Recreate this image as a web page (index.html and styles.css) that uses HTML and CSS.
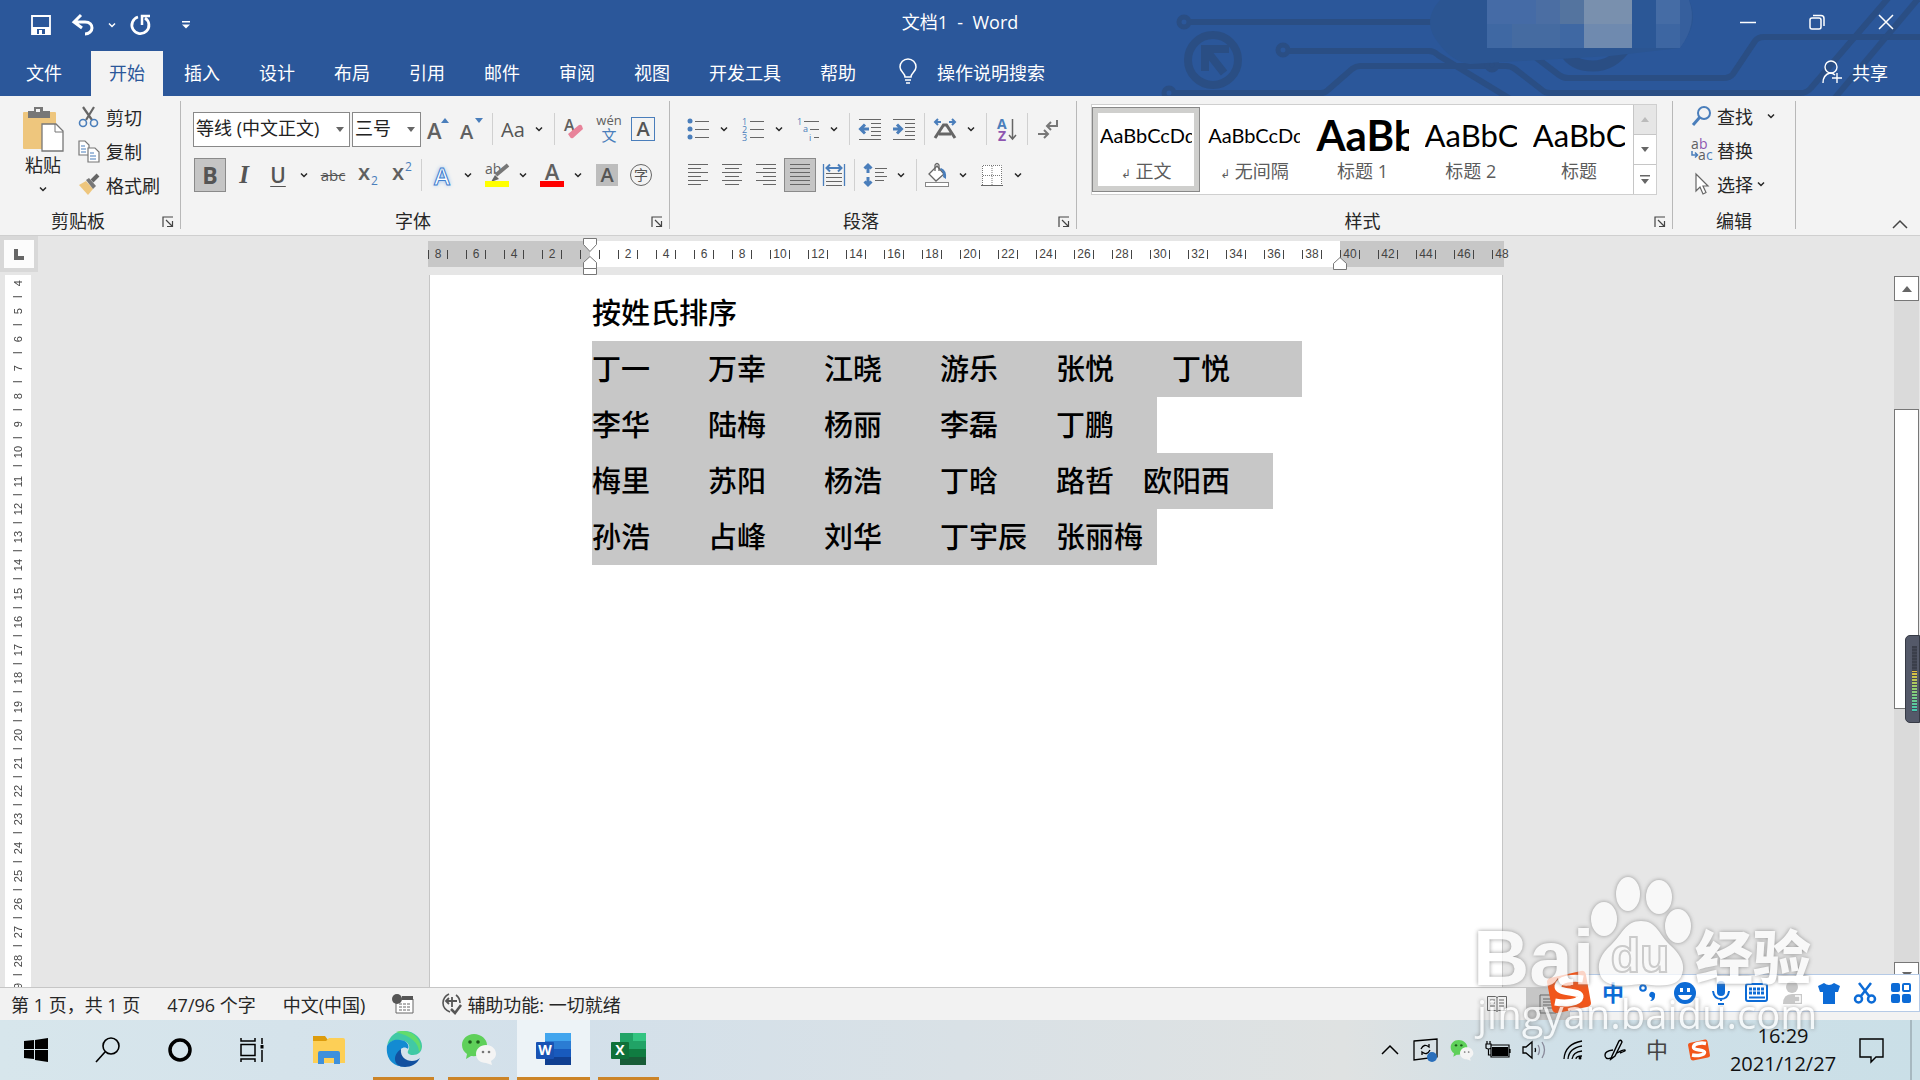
FILE: index.html
```html
<!DOCTYPE html>
<html lang="zh-CN">
<head>
  <meta charset="UTF-8">
  <meta name="viewport" content="width=device-width, initial-scale=1.0">
  <title>文档1 - Word</title>
  <link rel="stylesheet" href="styles.css">
</head>
<body>
  <!-- Shared icons -->
  <svg class="defs" aria-hidden="true">
    <symbol id="chev" viewBox="0 0 8 6"><path d="M1 1.500l3 3 3-3" fill="none" stroke="currentColor" stroke-width="1.500"/></symbol>
    <symbol id="launch" viewBox="0 0 12 12"><path d="M1 11V1h10M4 4l6 6M10.500 5v5.500H5" fill="none" stroke="#444" stroke-width="1.200"/></symbol>
    <symbol id="sogou" viewBox="0 0 48 48">
      <path d="M5 10q-3 1-3 4l5 27q1 4 5 4l30-6q4-1 4-4L41 7q-1-5-5-4z" fill="#f1561b"/>
      <path d="M38 11C28 9 14 11 13 18c-1 8 23 4 22 11-1 6-15 7-25 5" fill="none" stroke="#fff" stroke-width="7"/>
    </symbol>
    <symbol id="wechat" viewBox="0 0 36 36">
      <path d="M13 3C6 3 1 8 1 14c0 4 2 7 5 9l-1 5 5-3c8 1 16-3 16-11C26 8 20 3 13 3z" fill="#5fd05a"/>
      <circle cx="9" cy="11" r="1.800" fill="#1d5a1b"/><circle cx="17" cy="11" r="1.800" fill="#1d5a1b"/>
      <path d="M25 14c-6 0-10 4-10 9s4 9 10 9l6 2-1-4c3-2 5-4 5-7 0-5-4-9-10-9z" fill="#f4f4f4"/>
      <circle cx="22" cy="21" r="1.300" fill="#777"/><circle cx="28" cy="21" r="1.300" fill="#777"/>
    </symbol>
  </svg>

  <header class="header">
    <svg class="header-art" viewBox="1160 0 760 96" aria-hidden="true">
      <g fill="none" stroke="#2a4e84" stroke-width="6">
        <circle cx="1184" cy="22" r="5" stroke-width="5"/>
        <path d="M1190 22h250"/>
        <circle cx="1213" cy="60" r="25" stroke-width="8"/>
        <circle cx="1283" cy="50" r="5" stroke-width="5"/>
        <path d="M1289 51h140q5 0 9 4l74 45"/>
        <circle cx="1169" cy="93" r="5" stroke-width="5"/>
        <path d="M1175 93h146q4 0 7-3l24-21q4-3 8-3h146q5 0 9 3l27 21q3 3 8 3h250q7 0 11-5L1890-4"/>
        <circle cx="1492" cy="65" r="5" stroke-width="5"/>
        <path d="M1534 56l25 19q4 3 9 3h155q7 0 10-4l22-33q3-4 9-4h160"/>
        <path d="M1834 99l84-100"/>
        <path d="M1565 52q8 14 28 14t34-20" stroke-width="11"/>
      </g>
      <path d="M1205 71V49h24M1206 50l18 23" fill="none" stroke="#2a4e84" stroke-width="8"/>
      <path d="M1440 0q-20 22 0 45 13 17 30 19l140-8 70-8q13-18 13-30 0-10-4-18z" fill="#2b5592"/>
      <g>
        <path fill="#456ba6" d="M1487 0h49v24h-49z"/><path fill="#4b6ea3" d="M1536 0h24v24h-24z"/>
        <path fill="#54749f" d="M1560 0h24v24h-24z"/><path fill="#7990ae" d="M1584 0h48v24h-48z"/>
        <path fill="#3f68a3" d="M1487 24h25v24h-25zM1560 24h24v24h-24z"/><path fill="#456ba1" d="M1512 24h48v24h-48z"/>
        <path fill="#6f8aaf" d="M1584 24h48v24h-48z"/><path fill="#2b5796" d="M1632 0h24v48h-24z"/>
        <path fill="#456ca5" d="M1656 0h24v24h-24z"/><path fill="#3d66a2" d="M1656 24h24v24h-24z"/>
        <path fill="#365f9d" d="M1680 0h9q9 24-9 48z"/>
      </g>
    </svg>

    <div class="titlebar">
      <div class="quick-access">
        <button class="qa-btn" aria-label="保存">
          <svg width="20" height="20" viewBox="0 0 20 20"><path d="M1 1h18v18H1z" fill="none" stroke="#fff" stroke-width="1.800"/><path d="M1 12h18v7H1z" fill="#fff"/><path d="M6 14h8v5H6z" fill="#2b579a"/><path d="M8 15h3v4H8z" fill="#fff"/></svg>
        </button>
        <button class="qa-btn" aria-label="撤消">
          <svg width="24" height="22" viewBox="0 0 24 22"><path d="M10 1L3 8l8 6M3 8h11c5 0 7 3 7 6s-3 6-7 6" fill="none" stroke="#fff" stroke-width="3"/></svg>
        </button>
        <button class="qa-btn narrow" aria-label="撤消选项"><svg width="8" height="6"><use href="#chev"/></svg></button>
        <button class="qa-btn" aria-label="重复">
          <svg width="22" height="22" viewBox="0 0 22 22"><path d="M8 3a8.500 8.500 0 1 0 7 1" fill="none" stroke="#fff" stroke-width="2.800"/><path d="M12 11V2h8" fill="none" stroke="#fff" stroke-width="2.500"/></svg>
        </button>
        <button class="qa-btn wide" aria-label="自定义快速访问工具栏">
          <svg width="8" height="8" viewBox="0 0 8 8"><path d="M0 0h8v1.500H0zM0 3.500h8L4 7.500z" fill="#fff"/></svg>
        </button>
      </div>
      <h1 class="doc-title">文档1 &nbsp;- &nbsp;Word</h1>
      <div class="window-controls">
        <button class="win-btn" aria-label="最小化"><svg width="16" height="16"><path d="M0 8.500h16" stroke="#fff" stroke-width="1.500"/></svg></button>
        <button class="win-btn" aria-label="向下还原"><svg width="16" height="16" viewBox="0 0 16 16" fill="none" stroke="#fff" stroke-width="1.500"><rect x="1" y="4" width="11" height="11" rx="2"/><path d="M4 1.500h8q3 0 3 3V12"/></svg></button>
        <button class="win-btn" aria-label="关闭"><svg width="16" height="16"><path d="M1 1l14 14M15 1L1 15" stroke="#fff" stroke-width="1.500"/></svg></button>
      </div>
    </div>

    <nav class="tabs">
      <button class="tab file">文件</button>
      <button class="tab active">开始</button>
      <button class="tab">插入</button>
      <button class="tab">设计</button>
      <button class="tab">布局</button>
      <button class="tab">引用</button>
      <button class="tab">邮件</button>
      <button class="tab">审阅</button>
      <button class="tab">视图</button>
      <button class="tab">开发工具</button>
      <button class="tab">帮助</button>
      <button class="tell-me">
        <svg width="18" height="26" viewBox="0 0 18 26" fill="none" stroke="#fff" stroke-width="1.500"><path d="M6 18c0-4-5-5-5-10a8 8 0 0 1 16 0c0 5-5 6-5 10zM6 21h6M7 24h4"/></svg>
        操作说明搜索
      </button>
      <button class="share">
        <svg width="20" height="24" viewBox="0 0 20 24" fill="none" stroke="#fff" stroke-width="1.400"><circle cx="9" cy="7" r="6"/><path d="M1 23c0-6 3-9 7-10 2 0 3 0 5 2M15 13v10M10 18h10"/></svg>
        共享
      </button>
    </nav>
  </header>

  <section class="ribbon">
    <div class="group clipboard">
      <div class="group-body">
        <button class="paste">
          <svg width="42" height="45" viewBox="0 0 42 45"><rect x="1" y="5" width="33" height="37" rx="1" fill="#eec67d"/><path d="M6 4h6V0h9v4h7v7H6z" fill="#777"/><path d="M14 2h4v3h-4z" fill="#f3f3f3"/><path d="M20 17h14l7 7v20H20z" fill="#fff" stroke="#777" stroke-width="1.300"/><path d="M33 17v8h8" fill="none" stroke="#777"/></svg>
          <span>粘贴</span>
          <svg class="chev" width="8" height="6"><use href="#chev"/></svg>
        </button>
        <div class="small-list">
          <button class="small-btn"><svg width="22" height="22" viewBox="0 0 22 22" fill="none"><path d="M5 1l9 13M16 1L8 14" stroke="#666" stroke-width="2.200"/><circle cx="5" cy="17" r="3.500" stroke="#4a7ebb" stroke-width="1.600"/><circle cx="16" cy="17" r="3.500" stroke="#4a7ebb" stroke-width="1.600"/></svg>剪切</button>
          <button class="small-btn"><svg width="22" height="22" viewBox="0 0 22 22" stroke="#777" stroke-width="1.200" fill="#fff"><path d="M1 1h6l4 4v10H1z"/><path d="M10 8h7l4 4v10H10z"/><path d="M3 6h4M3 9h5M3 12h5M12 13h4M12 16h6M12 19h6" stroke="#4a7ebb"/></svg>复制</button>
          <button class="small-btn"><svg width="22" height="22" viewBox="0 0 22 22"><path d="M1 11l7-4 7 8-5 6z" fill="#eec67d"/><path d="M8 6l3-2 7 8-3 3z" fill="#777"/><path d="M14 7l6-6" stroke="#666" stroke-width="4"/></svg>格式刷</button>
        </div>
      </div>
      <div class="group-foot"><span>剪贴板</span><button class="launcher" aria-label="剪贴板设置"><svg width="12" height="12"><use href="#launch"/></svg></button></div>
    </div>

    <div class="group font-group">
      <div class="group-body rows">
        <div class="tool-row">
          <label class="combo font-name"><select aria-label="字体"><option>等线 (中文正文)</option></select></label>
          <label class="combo font-size"><select aria-label="字号"><option>三号</option></select></label>
          <button class="tool" aria-label="增大字号"><svg width="26" height="26" viewBox="0 0 26 26"><path d="M16 7l4-5 4 5z" fill="#4a7ebb"/><text x="2" y="23" class="glyph g22">A</text></svg></button>
          <button class="tool" aria-label="减小字号"><svg width="26" height="26" viewBox="0 0 26 26"><path d="M16 2l4 5 4-5z" fill="#4a7ebb"/><text x="1" y="23" class="glyph g20">A</text></svg></button>
          <i class="sep"></i>
          <button class="tool aa">Aa</button>
          <button class="drop" aria-label="更改大小写"><svg width="8" height="6"><use href="#chev"/></svg></button>
          <i class="sep"></i>
          <button class="tool" aria-label="清除格式"><svg width="24" height="24" viewBox="0 0 24 24"><text x="1" y="14" class="glyph g16">A</text><path d="M5 17l11-9q2-1 3 1l1 3-10 9q-2 1-3-1z" fill="#e8839a"/></svg></button>
          <button class="tool" aria-label="拼音指南"><svg width="26" height="28" viewBox="0 0 26 28"><text x="13" y="10" text-anchor="middle" class="plain g13">wén</text><text x="13" y="26" text-anchor="middle" class="blue cjk g15">文</text></svg></button>
          <button class="tool" aria-label="字符边框"><span class="char-border">A</span></button>
        </div>
        <div class="tool-row">
          <button class="tool pressed bold" aria-pressed="true">B</button>
          <button class="tool italic">I</button>
          <button class="tool under">U</button>
          <button class="drop" aria-label="下划线选项"><svg width="8" height="6"><use href="#chev"/></svg></button>
          <button class="tool strike">abc</button>
          <button class="tool" aria-label="下标"><svg width="26" height="26" viewBox="0 0 26 26"><text x="4" y="18" class="glyph g22">x</text><text x="17" y="23" class="blue g12">2</text></svg></button>
          <button class="tool" aria-label="上标"><svg width="26" height="26" viewBox="0 0 26 26"><text x="4" y="18" class="glyph g22">x</text><text x="17" y="9" class="blue g12">2</text></svg></button>
          <i class="sep"></i>
          <button class="tool effect">A</button>
          <button class="drop" aria-label="文本效果"><svg width="8" height="6"><use href="#chev"/></svg></button>
          <button class="tool" aria-label="突出显示"><svg width="26" height="26" viewBox="0 0 26 26"><text x="1" y="12" class="plain g14">ab</text><path d="M24 3L12 13" stroke="#777" stroke-width="4"/><path d="M7 20l4-7 4 4z" fill="#666"/><path d="M1 19h24v6H1z" fill="#ff0"/></svg></button>
          <button class="drop" aria-label="突出显示颜色"><svg width="8" height="6"><use href="#chev"/></svg></button>
          <button class="tool" aria-label="字体颜色"><svg width="26" height="26" viewBox="0 0 26 26"><text x="13" y="18" text-anchor="middle" class="glyph g22">A</text><path d="M1 19h24v6H1z" fill="#f00"/></svg></button>
          <button class="drop" aria-label="字体颜色选项"><svg width="8" height="6"><use href="#chev"/></svg></button>
          <button class="tool" aria-label="字符底纹"><span class="char-shade">A</span></button>
          <button class="tool" aria-label="带圈字符"><span class="char-circle">字</span></button>
        </div>
      </div>
      <div class="group-foot"><span>字体</span><button class="launcher" aria-label="字体设置"><svg width="12" height="12"><use href="#launch"/></svg></button></div>
    </div>

    <div class="group">
      <div class="group-body rows">
        <div class="tool-row">
          <button class="tool" aria-label="项目符号"><svg width="24" height="24" viewBox="0 0 24 24"><g fill="#4a7ebb"><circle cx="4" cy="4" r="2.500"/><circle cx="4" cy="12" r="2.500"/><circle cx="4" cy="20" r="2.500"/></g><path class="line" d="M9 4.500h14M9 12.500h14M9 20.500h14"/></svg></button>
          <button class="drop" aria-label="项目符号库"><svg width="8" height="6"><use href="#chev"/></svg></button>
          <button class="tool" aria-label="编号"><svg width="24" height="24" viewBox="0 0 24 24"><text x="1" y="8" class="blue g9">1</text><text x="1" y="16" class="blue g9">2</text><text x="1" y="24" class="blue g9">3</text><path class="line" d="M9 4.500h14M9 12.500h14M9 20.500h14"/></svg></button>
          <button class="drop" aria-label="编号库"><svg width="8" height="6"><use href="#chev"/></svg></button>
          <button class="tool" aria-label="多级列表"><svg width="24" height="24" viewBox="0 0 24 24"><text x="1" y="8" class="blue g9">1</text><text x="7" y="15" class="blue g9">a</text><text x="13" y="24" class="blue g9">i</text><path class="line" d="M8 4.500h15M14 12.500h9M18 20.500h5"/></svg></button>
          <button class="drop" aria-label="列表库"><svg width="8" height="6"><use href="#chev"/></svg></button>
          <i class="sep"></i>
          <button class="tool" aria-label="减少缩进量"><svg width="24" height="24" viewBox="0 0 24 24"><path class="line" d="M1 2.500h22M13 6.500h10M13 10.500h10M13 14.500h10M13 18.500h10M1 22.500h22"/><path d="M11 12H3M7 7.500L2.500 12 7 16.500" class="arrow"/></svg></button>
          <button class="tool" aria-label="增加缩进量"><svg width="24" height="24" viewBox="0 0 24 24"><path class="line" d="M1 2.500h22M13 6.500h10M13 10.500h10M13 14.500h10M13 18.500h10M1 22.500h22"/><path d="M1 12h8M5 7.500L9.500 12 5 16.500" class="arrow"/></svg></button>
          <i class="sep"></i>
          <button class="tool" aria-label="中文版式"><svg width="26" height="24" viewBox="0 0 26 24"><path d="M9 5H3M6 2L3 5l3 3M17 5h6M20 2l3 3-3 3" class="arrow thin"/><path d="M3 21L11.500 8h3L23 21M7 17h12" fill="none" stroke="#666" stroke-width="3"/></svg></button>
          <button class="drop" aria-label="中文版式选项"><svg width="8" height="6"><use href="#chev"/></svg></button>
          <i class="sep"></i>
          <button class="tool" aria-label="排序"><svg width="22" height="26" viewBox="0 0 22 26"><text x="1" y="13" class="blue bold g14">A</text><text x="2" y="25" class="purple bold g14">Z</text><path d="M16.500 3v20M13 19l3.500 4 3.500-4" fill="none" stroke="#666" stroke-width="1.500"/></svg></button>
          <i class="sep"></i>
          <button class="tool" aria-label="显示编辑标记"><svg width="22" height="22" viewBox="0 0 22 22" fill="none" stroke="#777" stroke-width="2"><path d="M20 2v6h-9M14 4l-4 4 4 4M1 16h9M7 12l4 4-4 4"/></svg></button>
        </div>
        <div class="tool-row">
          <button class="tool" aria-label="左对齐"><svg width="22" height="24"><path class="line" d="M1 1.500h20M1 5.500h13M1 9.500h20M1 13.500h13M1 17.500h20M1 21.500h13"/></svg></button>
          <button class="tool" aria-label="居中"><svg width="22" height="24"><path class="line" d="M1 1.500h20M4 5.500h14M1 9.500h20M4 13.500h14M1 17.500h20M4 21.500h14"/></svg></button>
          <button class="tool" aria-label="右对齐"><svg width="22" height="24"><path class="line" d="M1 1.500h20M8 5.500h13M1 9.500h20M8 13.500h13M1 17.500h20M8 21.500h13"/></svg></button>
          <button class="tool pressed" aria-pressed="true" aria-label="两端对齐"><svg width="22" height="24"><path class="line" d="M1 1.500h20M1 5.500h20M1 9.500h20M1 13.500h20M1 17.500h20M1 21.500h20"/></svg></button>
          <button class="tool" aria-label="分散对齐"><svg width="24" height="24" viewBox="0 0 24 24"><path d="M1.500 1v22M22.500 1v22" stroke="#4a7ebb" stroke-width="1.300"/><path d="M5 5h14M8 1.500L4.500 5 8 8.500M16 1.500L19.500 5 16 8.500" class="arrow thin"/><path class="line" d="M4 10.500h16M4 14.500h16M4 18.500h16M4 22.500h16"/></svg></button>
          <i class="sep"></i>
          <button class="tool" aria-label="行距"><svg width="24" height="24" viewBox="0 0 24 24"><path d="M5 2v8M1.500 5.500L5 2l3.500 3.500M5 14v8M1.500 18.500L5 22l3.500-3.500" class="arrow"/><path class="line" d="M12 5.500h12M12 9.500h9M12 13.500h12M12 17.500h9"/></svg></button>
          <button class="drop" aria-label="行距选项"><svg width="8" height="6"><use href="#chev"/></svg></button>
          <i class="sep"></i>
          <button class="tool" aria-label="底纹"><svg width="26" height="26" viewBox="0 0 26 26"><path d="M5 12l8-8 7 8-8 7z" fill="#fff" stroke="#666" stroke-width="1.300"/><path d="M11 9V3q2-3 4 0v6" fill="none" stroke="#666" stroke-width="1.300"/><path d="M17 6q6 2 5 11l-3-2q1-5-3-8z" fill="#4a7ebb"/><rect x="1.500" y="20.500" width="23" height="4" fill="#fff" stroke="#888"/></svg></button>
          <button class="drop" aria-label="底纹颜色"><svg width="8" height="6"><use href="#chev"/></svg></button>
          <button class="tool" aria-label="边框"><svg width="24" height="24" viewBox="0 0 24 24"><path d="M2 2h20v20H2z" fill="#fff"/><path d="M2.500 22V2.500h19V22M12 3v19M3 12.500h18" fill="none" stroke="#777" stroke-dasharray="1 1"/><path class="line" d="M1 22.500h22"/></svg></button>
          <button class="drop" aria-label="边框选项"><svg width="8" height="6"><use href="#chev"/></svg></button>
        </div>
      </div>
      <div class="group-foot"><span>段落</span><button class="launcher" aria-label="段落设置"><svg width="12" height="12"><use href="#launch"/></svg></button></div>
    </div>

    <div class="group styles-group">
      <div class="group-body">
        <div class="gallery">
          <div class="gallery-items">
            <button class="style-item selected"><span class="preview">AaBbCcDd</span><span class="style-name"><small>↲</small> 正文</span></button>
            <button class="style-item"><span class="preview">AaBbCcDd</span><span class="style-name"><small>↲</small> 无间隔</span></button>
            <button class="style-item"><span class="preview h-one">AaBb</span><span class="style-name">标题 1</span></button>
            <button class="style-item"><span class="preview h-two">AaBbC</span><span class="style-name">标题 2</span></button>
            <button class="style-item"><span class="preview h-two">AaBbC</span><span class="style-name">标题</span></button>
          </div>
          <div class="gallery-scroll">
            <button class="off" aria-label="上一行"><svg width="8" height="6"><path d="M0 5h8L4 0z" fill="#bbb"/></svg></button>
            <button aria-label="下一行"><svg width="8" height="6"><path d="M0 0h8L4 5z" fill="#666"/></svg></button>
            <button aria-label="其他样式"><svg width="10" height="9"><path d="M0 0h10v1.500H0zM1 4h8L5 9z" fill="#666"/></svg></button>
          </div>
        </div>
      </div>
      <div class="group-foot"><span>样式</span><button class="launcher" aria-label="样式窗格"><svg width="12" height="12"><use href="#launch"/></svg></button></div>
    </div>

    <div class="group editing">
      <div class="group-body">
        <div class="small-list">
          <button class="small-btn"><svg width="22" height="22" viewBox="0 0 22 22" fill="none" stroke="#4a7ebb"><circle cx="13" cy="8" r="6" stroke-width="2"/><path d="M9 12l-7 8" stroke-width="3"/></svg>查找<svg class="chev far" width="8" height="6"><use href="#chev"/></svg></button>
          <button class="small-btn"><svg width="22" height="24" viewBox="0 0 22 24"><text x="0" y="11" class="plain g14">a</text><text x="8" y="11" class="purple g14">b</text><path d="M1 13v4h5M4 14.500L6.500 17 4 19.500" fill="none" stroke="#4a7ebb" stroke-width="1.500"/><text x="7" y="22" class="plain g14">a</text><text x="15" y="22" class="blue g14">c</text></svg>替换</button>
          <button class="small-btn"><svg width="22" height="22" viewBox="0 0 22 22"><path d="M5 1v17l4-4 3 7 3-1.500L12 13h5z" fill="#fff" stroke="#666" stroke-width="1.200"/></svg>选择<svg class="chev" width="8" height="6"><use href="#chev"/></svg></button>
        </div>
      </div>
      <div class="group-foot"><span>编辑</span></div>
    </div>

    <button class="collapse" aria-label="折叠功能区"><svg width="16" height="10"><path d="M1 9l7-7 7 7" fill="none" stroke="#444" stroke-width="1.500"/></svg></button>
  </section>

  <main class="workspace">
    <div class="side">
      <button class="tab-stop" aria-label="制表符"><svg width="10" height="11"><path d="M2 0v9h8" fill="none" stroke="#666" stroke-width="4"/></svg></button>
      <div class="v-ruler">
        <div class="v-scale">
          <span>4</span><span>5</span><span>6</span><span>7</span><span>8</span><span>9</span><span>10</span><span>11</span><span>12</span><span>13</span><span>14</span><span>15</span><span>16</span><span>17</span><span>18</span><span>19</span><span>20</span><span>21</span><span>22</span><span>23</span><span>24</span><span>25</span><span>26</span><span>27</span><span>28</span><span>29</span>
        </div>
      </div>
    </div>

    <div class="canvas">
      <div class="h-ruler">
        <div class="h-scale">
          <span>8</span><span>6</span><span>4</span><span>2</span><span></span><span>2</span><span>4</span><span>6</span><span>8</span><span>10</span><span>12</span><span>14</span><span>16</span><span>18</span><span>20</span><span>22</span><span>24</span><span>26</span><span>28</span><span>30</span><span>32</span><span>34</span><span>36</span><span>38</span><span>40</span><span>42</span><span>44</span><span>46</span><span>48</span>
        </div>
        <svg class="indent left" width="14" height="38" viewBox="0 0 14 38" fill="#fff" stroke="#777"><path d="M.5.500h13v6l-6.500 7-6.500-7zM.5 30.500v-6l6.500-6 6.500 6v6zM.5 30.500h13v6H.5z"/></svg>
        <svg class="indent right" width="14" height="14" viewBox="0 0 14 14" fill="#fff" stroke="#777"><path d="M.5 12.500v-6l6.500-6 6.500 6v6z"/></svg>
      </div>
      <article class="page">
        <p>按姓氏排序</p>
        <p><mark>丁一　　万幸　　江晓　　游乐　　张悦　　丁悦　　</mark></p>
        <p><mark>李华　　陆梅　　杨丽　　李磊　　丁鹏　</mark></p>
        <p><mark>梅里　　苏阳　　杨浩　　丁晗　　路哲　欧阳西　</mark></p>
        <p><mark>孙浩　　占峰　　刘华　　丁宇辰　张丽梅</mark></p>
      </article>
    </div>

    <div class="scrollbar">
      <button aria-label="向上滚动"><svg width="10" height="6"><path d="M0 6h10L5 0z" fill="#666"/></svg></button>
      <div class="track"><div class="thumb"></div></div>
      <button aria-label="向下滚动"><svg width="10" height="6"><path d="M0 0h10L5 6z" fill="#666"/></svg></button>
    </div>
  </main>

  <footer class="statusbar">
    <span>第 1 页，共 1 页</span>
    <span>47/96 个字</span>
    <span>中文(中国)</span>
    <svg class="macro" width="22" height="20" viewBox="0 0 22 20"><path d="M4 5h17v14H4z" fill="#fff" stroke="#666"/><path d="M10 2h11v4H10z" fill="#555"/><circle cx="5" cy="5" r="5" fill="#555"/><path d="M7 10h11M7 13h11M7 16h11" stroke="#666" stroke-dasharray="3 1"/></svg>
    <span class="access">
      <svg width="22" height="22" viewBox="0 0 22 22" fill="none" stroke="#555" stroke-width="1.600"><path d="M8 1q-6 3-6 9t7 9M15 2q4 3 4 8"/><path d="M5 8h11M11 4v10M8 5L5 8l3 3" stroke-width="1.800"/><path d="M10 16l4 4 6-8" stroke-width="2.500"/></svg>
      辅助功能: 一切就绪
    </span>
    <div class="views">
      <button aria-label="阅读视图"><svg width="20" height="18" viewBox="0 0 20 18" fill="none" stroke="#666"><path d="M.5 1.500h8l1.500 1 1.500-1h8v14h-8l-1.500 1-1.500-1h-8zM10 2v14M3 5h5M3 8h5M3 11h5M12 5h5M12 8h5M12 11h5"/></svg></button>
      <button class="current" aria-label="页面视图"><svg width="18" height="20" viewBox="0 0 18 20" fill="none" stroke="#666"><path d="M1 1h16v18H1zM4 5h10M4 8h10M4 11h10M4 14h10"/></svg></button>
    </div>
  </footer>

  <div class="taskbar">
    <button class="task" aria-label="开始"><svg width="24" height="24" viewBox="0 0 24 24"><path d="M0 3l10-1v9H0zM11 2l13-2v11H11zM0 12h10v9L0 20zM11 12h13v12l-13-2z"/></svg></button>
    <button class="task" aria-label="搜索"><svg width="26" height="26" viewBox="0 0 26 26" fill="none" stroke="#000" stroke-width="1.600"><circle cx="16" cy="9" r="8"/><path d="M10 15L1 25"/></svg></button>
    <button class="task" aria-label="Cortana"><svg width="26" height="26"><circle cx="13" cy="13" r="10" fill="none" stroke="#000" stroke-width="3.500"/></svg></button>
    <button class="task" aria-label="任务视图"><svg width="26" height="26" viewBox="0 0 26 26" fill="none" stroke="#000" stroke-width="1.500"><path d="M2 1v3h14V1M2 25v-3h14v3M2 7.500h14v11H2zM23 1v6M23 13v12"/><path d="M21.500 8h3v3.500h-3z" fill="#000" stroke="none"/></svg></button>
    <div class="apps">
      <button class="task app" aria-label="文件资源管理器"><svg width="34" height="30" viewBox="0 0 34 30"><path d="M1 1h12l3 4h-1v5H1z" fill="#dd9c0c"/><path d="M1 6h13l3-3h14q2 0 2 2v23H1z" fill="#fdcf56"/><path d="M6 29V18q0-2 2-2h18q2 0 2 2v11h-6v-6H12v6z" fill="#3e90dc"/></svg></button>
      <button class="task app open" aria-label="Microsoft Edge"><svg width="36" height="36" viewBox="0 0 36 36"><path d="M1 15C3 5 10 0 18 0c11 0 18 8 18 15 0 6-4 9-9 9-4 0-6-2-5-4 4-6-2-11-8-11C8 9 3 11 1 15z" fill="#41c9a5"/><path d="M10 1C16-1 26 0 31 7c4 5 5 11 2 14 0-9-8-16-23-20z" fill="#62dc6c"/><path d="M1 15c3-6 9-7 13-6 6 0 10 5 8 9-2-2-5-2-7 0-5 6-1 15 9 16-12 5-25-3-23-19z" fill="#138bd2"/><path d="M15 18c-1 8 5 12 11 12 3 0 6-1 8-3-3 6-9 9-15 9C7 36 6 24 15 18z" fill="#12509f"/></svg></button>
      <button class="task app open" aria-label="微信"><svg width="36" height="36"><use href="#wechat"/></svg></button>
      <button class="task app open active" aria-label="Word"><svg width="36" height="34" viewBox="0 0 36 34"><path d="M9 1h26v9H9z" fill="#41a5ee"/><path d="M9 9h26v8H9z" fill="#2b7cd3"/><path d="M9 17h26v8H9z" fill="#185abd"/><path d="M9 25h26v8H9z" fill="#103f91"/><rect y="10" width="18" height="17" rx="1" fill="#1852b3"/><text x="9" y="23" text-anchor="middle" class="app-letter">W</text></svg></button>
      <button class="task app open" aria-label="Excel"><svg width="36" height="34" viewBox="0 0 36 34"><path d="M9 1h26v9H9z" fill="#21a366"/><path d="M22 1h13v8H22z" fill="#33c481"/><path d="M9 9h26v8H9z" fill="#21a366"/><path d="M9 17h26v8H9z" fill="#107c41"/><path d="M9 25h26v8H9z" fill="#185c37"/><rect y="10" width="18" height="17" rx="1" fill="#0f7038"/><text x="9" y="23" text-anchor="middle" class="app-letter">X</text></svg></button>
    </div>

    <div class="tray">
      <button aria-label="显示隐藏的图标"><svg width="18" height="10"><path d="M1 9l8-8 8 8" fill="none" stroke="#000" stroke-width="1.500"/></svg></button>
      <button aria-label="更新"><svg width="26" height="24" viewBox="0 0 26 24"><path d="M1 3l23-2v18L1 22z" fill="none" stroke="#000" stroke-width="1.300"/><path d="M8 11q3-6 8-2V6M17 12q-3 6-8 2v3" fill="none" stroke="#000" stroke-width="1.300"/><circle cx="19" cy="19" r="5" fill="#2a6fbb"/></svg></button>
      <button aria-label="微信"><svg width="26" height="24"><use href="#wechat"/></svg></button>
      <button aria-label="电池"><svg width="26" height="20" viewBox="0 0 26 20"><path d="M7 7h16v9H7z"/><path d="M6 5h18v12H6zM25 9v4M1 4h5v4q-2.500 2-5 0zM2 1v3M5 1v3M3.500 9v6H6" fill="none" stroke="#000" stroke-width="1.200"/></svg></button>
      <button aria-label="音量"><svg width="24" height="20" viewBox="0 0 24 20" fill="none" stroke="#000" stroke-width="1.300"><path d="M1 7h3l6-5v16l-6-5H1zM13 8q1 2 0 4"/><path d="M16 5q3 5 0 10M20 2q5 8 0 16" stroke="#889"/></svg></button>
      <button class="wide" aria-label="网络"><svg width="20" height="20" viewBox="0 0 20 20" fill="none" stroke="#000" stroke-width="1.300"><path d="M1 19Q2 4 19 1M5 19Q6 8 19 6M9 19q1-7 10-8M13 19q0-3 6-3"/><circle cx="17" cy="18" r="1.500" fill="#000" stroke="none"/></svg></button>
      <button class="wide" aria-label="手写笔"><svg width="22" height="22" viewBox="0 0 22 22" fill="none" stroke="#000" stroke-width="1.400"><path d="M8 17L15 2q2-2 3 1L11 17l-4 3zM9 11q-8 1-8 5 0 5 6 3M13 14q7-4 8-3t-5 3"/></svg></button>
      <button class="wide lang" aria-label="输入法">中</button>
      <button class="wide" aria-label="搜狗输入法"><svg width="24" height="24"><use href="#sogou"/></svg></button>
      <button class="clock"><span>16:29</span><span>2021/12/27</span></button>
      <button class="notice" aria-label="通知"><svg width="26" height="26" viewBox="0 0 26 26"><path d="M1 2h23v18h-7l-5 5v-5H1z" fill="none" stroke="#000" stroke-width="1.400"/></svg></button>
    </div>
  </div>

  <!-- Floating input method bar -->
  <div class="ime">
    <svg class="ime-logo" width="48" height="48"><use href="#sogou"/></svg>
    <button class="ime-text">中</button>
    <button aria-label="标点"><svg width="22" height="24" viewBox="0 0 22 24"><circle cx="5" cy="7" r="2.800" fill="none" stroke="#0c6bd6" stroke-width="2"/><path d="M12 16a3 3 0 1 1 5-1q0 5-5 5 3-2 1-4z" fill="#0c6bd6"/></svg></button>
    <button aria-label="表情"><svg width="22" height="22" viewBox="0 0 22 22"><circle cx="11" cy="11" r="11" fill="#0c6bd6"/><path d="M6 6h3v4H6zM13 6h3v4h-3zM4 13h14q-2 5-7 5t-7-5z" fill="#fff"/></svg></button>
    <button aria-label="语音"><svg width="20" height="24" viewBox="0 0 20 24"><rect x="6" width="8" height="15" rx="4" fill="#0c6bd6"/><path d="M2 10q1 8 8 8t8-8M10 18v2M7 23h6" fill="none" stroke="#0c6bd6" stroke-width="2"/></svg></button>
    <button aria-label="软键盘"><svg width="24" height="20" viewBox="0 0 24 20"><rect x="1" y="1" width="21" height="17" rx="2" fill="#fff" stroke="#0c6bd6" stroke-width="2"/><path d="M4 6h16M4 10h16" stroke="#0c6bd6" stroke-width="3" stroke-dasharray="3 1"/><path d="M4 14.500h16" stroke="#0c6bd6" stroke-width="2"/></svg></button>
    <button aria-label="账号"><svg width="22" height="24" viewBox="0 0 22 24" fill="#c8c8c8"><circle cx="10" cy="6" r="6"/><path d="M1 23q0-10 9-10h10v10z"/><path d="M13 15h5v6h-5" fill="none" stroke="#fff" stroke-width="1.500"/></svg></button>
    <button aria-label="皮肤"><svg width="24" height="22" viewBox="0 0 24 22"><path d="M7 1q5 4 10 0l6 3-2 6h-3v12H6V10H3L1 4z" fill="#0c6bd6"/></svg></button>
    <button aria-label="截图"><svg width="24" height="22" viewBox="0 0 24 22" fill="none" stroke="#0c6bd6" stroke-width="2.500"><path d="M6 1l10 13M18 1L8 14"/><circle cx="5.500" cy="17" r="3.500"/><circle cx="18.500" cy="17" r="3.500"/></svg></button>
    <button aria-label="工具箱"><svg width="20" height="20" viewBox="0 0 20 20" fill="#0c6bd6"><rect width="9" height="9" rx="2"/><rect y="11" width="9" height="9" rx="2"/><rect x="11" y="11" width="9" height="9" rx="2"/><rect x="12" y="1" width="7" height="7" rx="1" fill="none" stroke="#0c6bd6" stroke-width="2"/></svg></button>
  </div>

  <div class="meter"><i></i></div>

  <svg class="watermark" width="360" height="180" viewBox="0 0 360 180" aria-hidden="true">
    <text x="0" y="110" class="wm-big">Bai</text>
    <g class="wm-shape">
      <ellipse cx="131" cy="44" rx="13" ry="17"/>
      <ellipse cx="155" cy="19" rx="12" ry="17"/>
      <ellipse cx="186" cy="22" rx="13" ry="17"/>
      <ellipse cx="205" cy="51" rx="13" ry="17"/>
      <path d="M168 46c-16 0-19 14-30 24-10 9-13 17-12 25 2 17 19 17 42 14 24 3 40 3 42-14 1-8-3-16-13-25-11-10-13-24-29-24z"/>
    </g>
    <text x="167" y="97" text-anchor="middle" class="wm-du">du</text>
    <text x="222" y="104" class="wm-cjk">经验</text>
    <text x="4" y="154" class="wm-url">jingyan.baidu.com</text>
  </svg>
</body>
</html>
```
FILE: styles.css
```css
:root {
  --word-blue: #2b579a;
  --ribbon: #f3f3f3;
  --canvas: #e6e6e6;
  --select: #c7c7c7;
  --text: #262626;
  --icon: #555555;
  --accent: #4a7ebb;
  --ime-blue: #0c6bd6;
}

* {
  box-sizing: border-box;
}

body {
  margin: 0;
  height: 100vh;
  display: flex;
  flex-direction: column;
  overflow: hidden;
  position: relative;
  background: var(--canvas);
  color: var(--text);
  font-family: "Open Sans", "Noto Sans CJK SC", sans-serif;
  font-size: 18px;
}

button {
  display: flex;
  align-items: center;
  justify-content: center;
  border: 0;
  padding: 0;
  margin: 0;
  background: none;
  color: inherit;
  font: inherit;
  white-space: nowrap;
}

svg {
  flex: none;
  overflow: visible;
}

.defs {
  position: absolute;
  width: 0;
  height: 0;
}

/* Header */
.header {
  position: relative;
  flex: none;
  background: var(--word-blue);
  color: #fff;
}

.header-art {
  position: absolute;
  top: 0;
  right: 0;
  width: 760px;
  height: 96px;
  overflow: hidden;
}

.titlebar {
  position: relative;
  display: grid;
  grid-template-columns: 1fr auto 1fr;
  height: 51px;
}

.quick-access {
  display: flex;
  height: 49px;
  padding-left: 20px;
}

.qa-btn {
  width: 42px;
}

.qa-btn.narrow {
  width: 16px;
}

.qa-btn.wide {
  width: 48px;
}

.doc-title {
  margin: 0;
  font-size: 18px;
  font-weight: 400;
  line-height: 44px;
}

.window-controls {
  display: flex;
  justify-content: flex-end;
  height: 44px;
}

.win-btn {
  width: 69px;
}

.tabs {
  position: relative;
  display: flex;
  gap: 3px;
  height: 45px;
  padding-left: 8px;
}

.tab {
  padding: 0 18px 3px;
}

.tab.file {
  margin-right: 8px;
}

.tab.active {
  background: var(--ribbon);
  color: var(--word-blue);
}

.tell-me {
  gap: 20px;
  padding: 0 0 3px 22px;
}

.share {
  gap: 10px;
  margin-left: auto;
  padding: 0 32px 3px 0;
}

/* Ribbon */
.ribbon {
  display: flex;
  flex: none;
  height: 140px;
  padding: 5px 0 6px;
  background: var(--ribbon);
  border-bottom: 1px solid #cfcfcf;
}

.group {
  display: flex;
  flex-direction: column;
  border-right: 1px solid #b8b8b8;
}

.group-body {
  display: flex;
  flex: 1;
  padding: 0 11px;
}

.font-group .group-body {
  padding: 0 9px 0 12px;
}

.group-foot {
  display: flex;
  align-items: center;
  height: 14px;
  line-height: 14px;
}

.group-foot span {
  flex: 1;
  padding-bottom: 2px;
  text-align: center;
}

.launcher {
  width: 24px;
}

.clipboard .group-body {
  gap: 8px;
  padding: 0 20px 0 16px;
}

.paste {
  flex-direction: column;
  justify-content: flex-start;
  width: 54px;
  padding-top: 6px;
  line-height: 26px;
}

.paste .chev {
  margin-top: 8px;
}

.small-list {
  display: flex;
  flex-direction: column;
}

.small-btn {
  justify-content: flex-start;
  gap: 6px;
  height: 34px;
  padding-bottom: 2px;
}

.editing .group-body {
  padding: 0 14px 0 18px;
}

.editing .small-btn {
  gap: 4px;
  padding-bottom: 4px;
}

.chev.far {
  margin: 0 6px 0 10px;
}

.rows {
  flex-direction: column;
  gap: 12px;
  padding-top: 11px;
}

.font-group .rows,
.group .rows {
  padding-top: 11px;
}

.tool-row {
  display: flex;
  align-items: center;
  height: 34px;
}

.tool {
  width: 34px;
  height: 34px;
  color: var(--icon);
}

.drop {
  width: 21px;
  height: 34px;
  padding-right: 3px;
}

.tool.pressed {
  width: 32px;
  margin: 0 1px;
  background: #c5c5c5;
  border: 1px solid #8a8a8a;
}

.sep {
  width: 1px;
  height: 32px;
  margin: 0 3px;
  background: #d0d0d0;
}

.combo {
  position: relative;
  height: 35px;
  margin-right: 2px;
}

.combo::after {
  content: "";
  position: absolute;
  right: 6px;
  top: 15px;
  border: 4px solid transparent;
  border-top: 5px solid #666;
  border-bottom: 0;
}

.combo select {
  width: 100%;
  height: 100%;
  padding: 0 2px 2px;
  appearance: none;
  background: #fff;
  border: 1px solid #888;
  border-radius: 0;
  color: #222;
  font: inherit;
}

.font-name {
  width: 157px;
}

.font-size {
  width: 69px;
  margin-right: 0;
}

.aa {
  font-size: 20px;
}

.tool.bold {
  font-size: 23px;
  font-weight: 700;
}

.italic {
  font-family: "Liberation Serif", serif;
  font-size: 25px;
  font-style: italic;
  font-weight: 700;
}

.under {
  font-size: 21px;
  font-weight: 600;
  text-decoration: underline;
  text-decoration-thickness: 1px;
  text-underline-offset: 3px;
}

.strike {
  font-size: 15px;
  text-decoration: line-through;
}

.effect {
  color: #fff;
  font-size: 24px;
  font-weight: 600;
  -webkit-text-stroke: 1px #3f7fd0;
  text-shadow: 0 0 4px #7fb2ea;
}

.char-border,
.char-shade {
  width: 24px;
  border: 1px solid var(--accent);
  font-size: 20px;
  font-weight: 600;
  line-height: 22px;
}

.char-shade {
  width: 22px;
  background: #bdbdbd;
  border: 0;
}

.char-circle {
  width: 22px;
  border: 1px solid #666;
  border-radius: 50%;
  font-size: 14px;
  line-height: 20px;
}

.glyph,
.plain {
  fill: #606060;
}

.glyph {
  font-weight: 600;
}

.blue {
  fill: var(--accent);
}

.purple {
  fill: #8e56b0;
}

.cjk {
  font-family: "Noto Sans CJK SC", sans-serif;
}

text.bold {
  font-weight: 700;
}

.g9 { font-size: 9px; }
.g12 { font-size: 12px; }
.g13 { font-size: 13px; }
.g14 { font-size: 14px; }
.g15 { font-size: 15px; }
.g16 { font-size: 16px; }
.g20 { font-size: 20px; }
.g22 { font-size: 22px; }

.line {
  fill: none;
  stroke: #666;
}

.arrow {
  fill: none;
  stroke: var(--accent);
  stroke-width: 3;
}

.arrow.thin {
  stroke-width: 2;
}

/* Style gallery */
.styles-group {
  flex: 1;
  min-width: 0;
}

.styles-group .group-body {
  align-items: flex-start;
  padding: 3px 15px 0 14px;
}

.gallery {
  display: flex;
  flex: 1;
  height: 91px;
  background: #fff;
  border: 1px solid #cfcfcf;
}

.gallery-items {
  display: grid;
  grid-template-columns: repeat(5, 1fr);
  flex: 1;
}

.style-item {
  flex-direction: column;
  align-items: stretch;
  justify-content: flex-start;
  min-width: 0;
  margin: 2px 0;
  padding: 5px 8px 0;
  color: #5c5c5c;
}

.style-item.selected {
  padding: 4px 7px 0;
  border: 1px solid #888;
  box-shadow: inset 0 0 0 5px #cfcfcd;
}

.preview {
  overflow: hidden;
  height: 46px;
  color: #000;
  font-family: Lato, sans-serif;
  font-size: 20px;
  line-height: 46px;
  text-align: left;
}

.preview.h-one {
  font-size: 42px;
  font-weight: 700;
}

.preview.h-two {
  font-size: 31px;
}

.style-name {
  line-height: 26px;
}

.style-name small {
  font-family: "DejaVu Sans", sans-serif;
  font-size: 12px;
}

.gallery-scroll {
  display: flex;
  flex-direction: column;
  width: 23px;
  border-left: 1px solid #c6c6c6;
}

.gallery-scroll button {
  flex: 1;
}

.gallery-scroll button + button {
  border-top: 1px solid #c6c6c6;
}

.gallery-scroll .off {
  background: #e6e6e6;
}

.collapse {
  align-self: flex-end;
  width: 40px;
  height: 10px;
  margin-left: 84px;
}

/* Document area */
.workspace {
  display: grid;
  grid-template-columns: 38px 1fr 26px;
  flex: 1;
  min-height: 0;
}

.side {
  display: flex;
  flex-direction: column;
  gap: 3px;
  min-height: 0;
}

.tab-stop {
  flex: none;
  height: 36px;
  background: #fcfcfc;
  border: 4px solid #d8d8d8;
}

.v-ruler {
  display: flex;
  flex: 1;
  width: 26px;
  min-height: 0;
  margin-left: 5px;
  overflow: hidden;
  background: #fff;
}

.v-scale {
  display: flex;
  flex: 1;
  flex-direction: column;
  margin: -6px 0 -16px;
}

.v-scale span {
  display: flex;
  align-items: center;
  justify-content: center;
  flex: 1;
  min-height: 0;
  background: linear-gradient(#444, #444) center top / 9px 1px no-repeat;
  color: #444;
  font-family: "Liberation Sans", sans-serif;
  font-size: 11px;
  writing-mode: vertical-rl;
  transform: rotate(180deg);
}

.canvas {
  display: flex;
  flex-direction: column;
  align-items: center;
  min-height: 0;
}

.h-ruler {
  position: relative;
  flex: none;
  width: 1076px;
  height: 39px;
  padding-top: 5px;
}

.h-scale {
  display: flex;
  height: 26px;
  background: linear-gradient(90deg, var(--select) 162px, #fff 162px, #fff 912px, var(--select) 912px);
}

.h-scale span {
  flex: none;
  width: 38px;
  background:
    linear-gradient(#444, #444) 9px center / 1px 9px no-repeat,
    linear-gradient(#444, #444) 28px center / 1px 9px no-repeat;
  color: #444;
  font-family: "Liberation Sans", sans-serif;
  font-size: 12px;
  line-height: 26px;
  text-align: center;
}

.h-scale span:first-child {
  margin-left: -9px;
}

.h-scale span:last-child {
  background-size: 1px 9px, 0 0;
}

.indent {
  position: absolute;
}

.indent.left {
  top: 2px;
  left: 155px;
}

.indent.right {
  top: 21px;
  left: 905px;
}

.page {
  flex: 1;
  width: 1074px;
  min-height: 0;
  padding: 10px 162px 0;
  background: #fff;
  border: 1px solid #c6c6c6;
  border-width: 0 1px;
  color: #000;
  font-family: "Noto Sans CJK SC", sans-serif;
  font-size: 29px;
  font-weight: 500;
}

.page p {
  display: flex;
  height: 56px;
  margin: 0;
  line-height: 53px;
  white-space: pre;
}

.page mark {
  padding-right: 14px;
  background: var(--select);
  color: inherit;
}

.scrollbar {
  display: flex;
  flex-direction: column;
  width: 25px;
  margin-top: 40px;
  min-height: 0;
  background: #dadada;
}

.scrollbar button {
  flex: none;
  height: 25px;
  background: #fff;
  border: 1px solid #777;
}

.track {
  display: flex;
  flex: 1;
  flex-direction: column;
}

.track::before {
  content: "";
  flex: 108;
}

.track::after {
  content: "";
  flex: 253;
}

.thumb {
  flex: 299;
  background: #fff;
  border: 1px solid #777;
}

/* Status bar */
.statusbar {
  display: flex;
  align-items: center;
  flex: none;
  gap: 27px;
  height: 33px;
  padding-left: 11px;
  background: #f2f2f2;
  border-top: 1px solid #c6c6c6;
}

.access {
  display: flex;
  align-items: center;
  gap: 4px;
}

.views {
  display: flex;
  align-self: stretch;
  margin-left: auto;
  margin-right: 350px;
}

.views button {
  width: 58px;
}

.views .current {
  width: 44px;
  background: #c6c6c6;
}

/* Taskbar */
.taskbar {
  display: flex;
  flex: none;
  height: 60px;
  background: linear-gradient(90deg, #d7e6ec, #d3e0ea 30%, #dfe2e2 70%, #d0e0e8 80%, #cadfe7);
}

.task {
  width: 72px;
  border: 0 solid #cc8427;
}

.apps {
  display: flex;
  margin-left: 3px;
}

.task.app {
  width: 61px;
  margin: 0 7px;
}

.task.open {
  border-bottom-width: 3px;
}

.task.active {
  width: 73px;
  margin: 0 1px;
  background: #edf3f7;
}

.tray {
  display: flex;
  margin-left: auto;
}

.tray button {
  width: 36px;
}

.tray .wide {
  width: 42px;
}

.tray .lang {
  padding-bottom: 4px;
  color: #444;
  font-size: 22px;
}

.tray .clock {
  flex-direction: column;
  width: 126px;
  color: #111;
  font-size: 20px;
  line-height: 28px;
}

.tray .notice {
  width: 52px;
  margin-right: 12px;
}

.tray::after {
  content: "";
  width: 8px;
  border-left: 2px solid #a7b8c0;
}

.app-letter {
  fill: #fff;
  font-size: 14px;
  font-weight: 700;
}

/* Floating pieces over the desktop */
.ime {
  position: absolute;
  right: 0;
  bottom: 68px;
  display: flex;
  height: 38px;
  padding-left: 24px;
  background: #fff;
  border: 1px solid #b5cae6;
}

.ime button {
  width: 36px;
}

.ime-logo {
  position: absolute;
  top: -7px;
  left: -26px;
}

.ime .ime-text {
  padding-bottom: 4px;
  color: var(--ime-blue);
  font-size: 22px;
  font-weight: 700;
}

.meter {
  position: absolute;
  top: 635px;
  right: 0;
  width: 15px;
  height: 88px;
  padding: 10px 2px 10px 6px;
  background: #545969;
  border: 1px solid #363a45;
  border-radius: 5px 0 0 5px;
}

.meter i {
  display: block;
  height: 100%;
  background:
    repeating-linear-gradient(transparent 0 2px, #454957 2px 3px),
    linear-gradient(#3b3f4b 38%, #e5bd3b 38%, #93cf70 65%, #3fc9b4);
}

.watermark {
  position: absolute;
  right: 87px;
  bottom: 25px;
  opacity: 0.75;
  filter: drop-shadow(0 0 2px #777);
  pointer-events: none;
}

.wm-big,
.wm-cjk,
.wm-url,
.wm-shape {
  fill: #fff;
}

.wm-big {
  font-family: "Liberation Sans", sans-serif;
  font-size: 78px;
  font-weight: 700;
}

.wm-du {
  fill: #fff;
  stroke: #c2c2c2;
  stroke-width: 2px;
  font-family: "Liberation Sans", sans-serif;
  font-size: 48px;
  font-weight: 700;
}

.wm-cjk {
  font-family: "Noto Sans CJK SC", sans-serif;
  font-size: 58px;
  font-weight: 900;
}

.wm-url {
  font-size: 40px;
}
```
